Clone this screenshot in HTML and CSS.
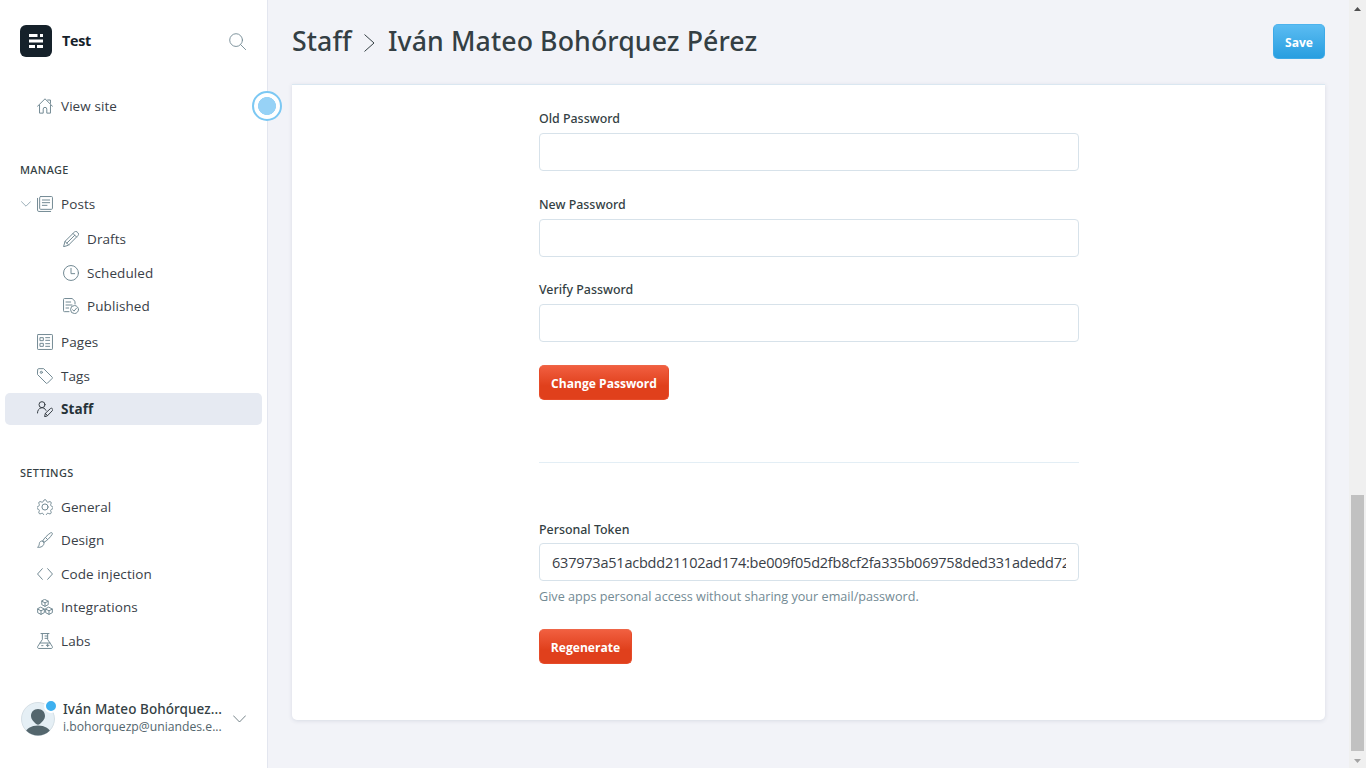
FILE: index.html
```html
<!DOCTYPE html>
<html lang="en">
<head>
<meta charset="utf-8">
<title>Test - Staff</title>
<link rel="stylesheet" href="styles.css">
</head>
<body>
<div class="app">
  <aside class="sidebar">
    <header class="site">
      <svg class="site-logo" viewBox="0 0 32 32"><rect width="32" height="32" rx="6" fill="#15212a"/><path d="M9 9h8.500v3H9zM20 9h3v3h-3zM9 14.500h14v3H9zM9 20h6v3H9zM17 20h6v3h-6z" fill="#fff"/></svg>
      <span class="site-name">Test</span>
      <svg class="search" viewBox="0 0 24 24"><circle cx="10" cy="10" r="9"/><path d="M16.500 16.500l7 7"/></svg>
    </header>

    <nav class="nav">
      <a class="item view-site"><svg viewBox="0 0 24 24"><path d="M.7 12.500L12 1.200l11.300 11.300M3.800 11v11.700h5.500v-6a2.700 2.700 0 0 1 5.400 0v6h5.500V11M16 3h4.200v5"/></svg>View site</a>

      <h2 class="heading">Manage</h2>
      <a class="item posts"><svg class="caret" viewBox="0 0 10 6"><path d="M.5.700L5 5.200 9.500.700"/></svg><svg viewBox="0 0 24 24"><rect x="4" y=".8" width="19.200" height="19.200" rx="1.500"/><path d="M.8 3.500v17.700a2 2 0 0 0 2 2h17.700M8 6h11M8 10h11M8 14h7"/></svg>Posts</a>
      <a class="item sub"><svg viewBox="0 0 24 24"><path d="M1 23l2-7.500L17.200 1.500a2.700 2.700 0 0 1 4 0l1.300 1.300a2.700 2.700 0 0 1 0 4L8.500 21zM3 15.500L8.500 21M15 3.700L20.300 9M5.700 18.200L17.700 6.300"/></svg>Drafts</a>
      <a class="item sub"><svg viewBox="0 0 24 24"><circle cx="12" cy="12" r="11.200"/><path d="M12 5v8h5.500"/></svg>Scheduled</a>
      <a class="item sub"><svg viewBox="0 0 24 24"><path d="M9 20.500H2.200A1.400 1.400 0 0 1 .8 19V2.200A1.400 1.400 0 0 1 2.200.8h11.500L18 5v4M4.500 6h7M4.500 10.500h9M4.500 15h4"/><circle cx="17.300" cy="17.300" r="6"/><path d="M14.300 17.500l2.200 2.200 3.800-4.500"/></svg>Published</a>
      <a class="item pages"><svg viewBox="0 0 24 24"><rect x=".8" y=".8" width="22.400" height="22.400" rx="1"/><path d="M5 5.500h4.500V10H5zM5 14h4.500v4.500H5zM13 5.500h6M13 9.500h6M13 14.500h6M13 18.500h6"/></svg>Pages</a>
      <a class="item tags"><svg viewBox="0 0 24 24"><path d="M1 2.300A1.300 1.300 0 0 1 2.300 1H10l12.800 12.800a1.300 1.300 0 0 1 0 1.800l-7.200 7.200a1.300 1.300 0 0 1-1.800 0L1 10z"/><circle cx="6.500" cy="6.500" r="1.600"/></svg>Tags</a>
      <a class="item active"><svg viewBox="0 0 24 24"><circle cx="7.500" cy="5.500" r="4.500"/><path d="M.7 18c0-9 10-10.500 12.800-4M11.500 23l1-4.500 7.500-7a2 2 0 0 1 3 3L15.800 22zM12.500 18.500l3.300 3.500"/></svg>Staff</a>

      <h2 class="heading settings">Settings</h2>
      <a class="item"><svg viewBox="0 0 24 24"><circle cx="12" cy="12" r="4.600"/><path d="M10 2.400c.8-2.100 3.200-2.100 4 0l.4 1.100c.5 1.100 1.600 1.500 2.700 1.100l1.100-.5c2-.8 3.700.8 2.900 2.900l-.5 1.100c-.4 1.100 0 2.200 1.100 2.700l1 .4c2 .8 2 3.200 0 4l-1 .3c-1.100.5-1.500 1.600-1.100 2.700l.5 1c.8 2.100-.9 3.700-2.900 2.900l-1.100-.5c-1.100-.4-2.200 0-2.700 1.100l-.4 1c-.8 2-3.200 2-4 0l-.4-1c-.5-1.100-1.600-1.500-2.700-1.100l-1.100.5c-2 .8-3.700-.8-2.900-2.900l.5-1c.4-1.100 0-2.200-1.100-2.700l-1-.3c-2-.8-2-3.200 0-4l1-.4c1.100-.5 1.500-1.600 1.100-2.700l-.5-1.100C2.100 4.900 3.800 3.300 5.800 4.100l1.100.5c1.100.4 2.200 0 2.700-1.100z"/></svg>General</a>
      <a class="item design"><svg viewBox="0 0 24 24"><path d="M8.500 13.500C11 9 15.500 4.500 20.500 1.200c1.700-1 3.200.6 2.300 2.300-3.300 5-7.500 9.300-12.300 12zM8.500 13.500c-2.500-.6-5 1.300-5 4-.1 2.300-1.200 4.300-2.700 5.500 4.500.5 10.500-1.500 9.700-7.500zM13 8.500l2.800 2.800"/></svg>Design</a>
      <a class="item code"><svg viewBox="0 0 24 24"><path d="M8 4L.8 12 8 20M16 4l7.200 8-7.200 8"/></svg>Code injection</a>
      <a class="item integrations"><svg viewBox="0 0 24 24"><path d="M12 .8l4.800 2.500v5.200L12 11 7.200 8.500V3.300zM7.200 3.300L12 5.800l4.800-2.500M12 5.800V11M6 12.500l5 2.600v5.400l-5 2.600-5-2.600v-5.400zM1 15.100l5 2.600 5-2.600M6 17.700v5.400M18 12.500l5 2.600v5.400l-5 2.600-5-2.600v-5.400zM13 15.100l5 2.600 5-2.600M18 17.700v5.400"/></svg>Integrations</a>
      <a class="item labs"><svg viewBox="0 0 24 24"><path d="M6 .8h12M8 .8v9L1.200 20c-1 1.700-.2 3.200 1.500 3.200h18.600c1.700 0 2.500-1.500 1.500-3.200L16 9.800v-9M12 4.500h4M12 8h4M4.500 15h15M7 19h2M14 18.500h4M16 16.500v4"/></svg>Labs</a>
    </nav>

    <footer class="user">
      <div class="avatar">
        <svg viewBox="0 0 34 34"><defs><clipPath id="face"><circle cx="17" cy="17" r="16.500"/></clipPath></defs><circle cx="17" cy="17" r="16.500" fill="#e5eff5" stroke="#d5dfe5"/><g clip-path="url(#face)" fill="#54666d"><path d="M17 7c4.300 0 7 3 7 7 0 3.700-3.800 6.700-5.200 8-1.100 1-2.500 1-3.600 0C13.800 20.700 10 17.700 10 14c0-4 2.700-7 7-7z"/><ellipse cx="17" cy="31" rx="12.500" ry="7.500"/></g></svg>
        <span class="badge"></span>
      </div>
      <div class="who"><div class="who-name">Iván Mateo Bohórquez...</div><div class="who-mail">i.bohorquezp@uniandes.e...</div></div>
      <svg class="user-caret" viewBox="0 0 13 8"><path d="M.5.800l6 6.200 6-6.200"/></svg>
    </footer>
    <span class="pulse"></span>
  </aside>

  <main class="main">
    <header class="topbar">
      <h1 class="title"><span class="crumb">Staff</span><svg viewBox="0 0 11 18"><path d="M.8.800L10 9 .8 17.200"/></svg><span>Iván Mateo Bohórquez Pérez</span></h1>
      <button class="btn save">Save</button>
    </header>
    <section class="card">
      <form class="form">
        <div class="field"><label>Old Password</label><input type="password"></div>
        <div class="field"><label>New Password</label><input type="password"></div>
        <div class="field"><label>Verify Password</label><input type="password"></div>
        <button type="button" class="btn red change">Change Password</button>
        <hr>
        <div class="field"><label>Personal Token</label><input class="token" type="text" value="637973a51acbdd21102ad174:be009f05d2fb8cf2fa335b069758ded331adedd72b"></div>
        <p class="hint">Give apps personal access without sharing your email/password.</p>
        <button type="button" class="btn red regen">Regenerate</button>
      </form>
    </section>
  </main>

  <div class="scrollbar"><svg viewBox="0 0 7 4"><path d="M0 4L3.500 0 7 4z" fill="#505050"/></svg><div class="thumb"></div><svg viewBox="0 0 7 4"><path d="M0 0h7L3.500 4z" fill="#a3a3a3"/></svg></div>
</div>
</body>
</html>
```
FILE: styles.css
```css
* { box-sizing: border-box; }
body { margin: 0; overflow: hidden; font-family: "Open Sans", "Noto Sans", sans-serif; color: #343f44; }
svg { fill: none; stroke-linecap: round; stroke-linejoin: round; flex: none; }
.app { display: flex; width: 1366px; height: 768px; background: #f2f3f8; }

.sidebar { position: relative; display: flex; flex-direction: column; width: 268px; background: #fff; border-right: 1px solid #e3e6ef; }
.site { display: flex; align-items: center; height: 82px; padding: 0 21px 0 20px; }
.site-logo { width: 32px; height: 32px; }
.site-name { margin: -2px 0 0 10px; flex: 1; font-size: 14.300px; font-weight: 700; color: #15212a; letter-spacing: -.3px; }
.search { width: 17px; height: 17px; stroke: #738a94; stroke-width: 1.300; }
.nav { height: 575px; padding: 8px 5px 0; display: flex; flex-direction: column; }
.item { display: flex; flex: none; align-items: center; height: 33.600px; padding-left: 32px; border-radius: 5px; font-size: 13.500px; color: #394047; letter-spacing: .08px; }
.item svg { width: 16px; height: 16px; margin-right: 8px; stroke: #738a94; stroke-width: 1.500; }
.view-site { height: 32px; }
.heading { margin: 39px 0 0 15px; height: 17px; font: 500 10.900px/17px "Noto Sans", sans-serif; letter-spacing: .35px; text-transform: uppercase; }
.posts { margin-top: 9px; padding-left: 16px; }
.item .caret { width: 10px; height: 6px; margin-right: 6px; stroke: #9baeb8; stroke-width: 1; }
.sub { height: 33.500px; padding-left: 58px; }
.posts + .sub { margin-top: 2px; }
.pages { margin-top: 2px; height: 33.500px; }
.tags { height: 34px; }
.active { height: 32px; margin-top: .3px; background: #e6eaf2; font-weight: 700; color: #263238; }
.item.active svg { stroke: #394047; }
.settings { margin-bottom: 9px; }
.design { height: 34px; }
.code { height: 33px; }
.integrations { height: 34px; }
.labs { height: 33px; }
.user { display: flex; align-items: center; margin: 42px 0 0 21px; height: 38px; }
.avatar { position: relative; width: 34px; height: 34px; margin-top: 1px; }
.avatar svg { display: block; width: 34px; height: 34px; }
.badge { position: absolute; top: -3px; right: -3px; width: 14px; height: 14px; border: 2px solid #fff; border-radius: 50%; background: #3eb0ef; }
.who { margin: 0 0 0 8px; width: 162px; white-space: nowrap; }
.who-name { font: 500 13.500px/18px "Noto Sans", sans-serif; letter-spacing: .06px; }
.who-mail { font-size: 12.200px; line-height: 18px; color: #54666d; }
.user-caret { width: 13px; height: 8px; margin: 2px 0 0 8px; stroke: #54666d; stroke-width: .8; }
.pulse { position: absolute; left: 252px; top: 91px; width: 30px; height: 30px; border: 2px solid #7cc8f3; border-radius: 50%; background: radial-gradient(circle, #97d2f6 0 8.700px, #fff 9.300px); }

.main { width: 1081px; padding: 0 24px; }
.topbar { display: flex; align-items: center; justify-content: space-between; height: 84px; padding-bottom: 1px; }
.title { display: flex; align-items: center; margin: -1px 0 0; font: 500 26.700px/36px "Noto Sans", "Open Sans", sans-serif; letter-spacing: .1px; white-space: nowrap; }
.title svg { width: 11px; height: 18px; margin: 3px 13px 0 13px; stroke: #343f44; stroke-width: 1; }
.crumb { width: 59px; }
.btn { display: block; height: 35px; padding: 1px 0 0; border: 1px solid; border-radius: 5px; font: 700 12.100px "Open Sans", sans-serif; color: #fff; text-align: center; }
.save { width: 52px; background: linear-gradient(#5bbcf2, #289ee0); border-color: #4db3ed #3daae8 #3da9e6; }
.card { height: 636px; padding: 24px 0 0 247px; background: #fff; border-top: 1px solid #dae7f1; border-radius: 0 0 5px 5px; box-shadow: 0 1px 4px rgba(40,60,90,.12); }
.form { width: 540px; }
.field { height: 85.700px; }
label { display: block; height: 24px; font: 500 12.400px/19px "Noto Sans", sans-serif; }
input { display: block; width: 540px; height: 38px; padding: 0 12px; border: 1px solid #d7e2ea; border-radius: 4px; background: #fff; outline: none; font: 14.500px "Open Sans", sans-serif; color: #394047; }
.token { letter-spacing: -.22px; }
.red { background: linear-gradient(#f15f40, #e0401c 60%, #e0401c); border-color: #ee6547 #e64b29 #e64b29; }
.change { width: 130px; margin-top: -1px; }
hr { height: 1px; margin: 62px 0 57px; border: 0; background: #e3eef5; }
hr + .field { height: 61px; }
hr + .field label { height: 23px; }
.hint { margin: 6px 0 23px; height: 19px; line-height: 19px; font-size: 12.630px; color: #738a94; white-space: nowrap; }
.regen { width: 93px; }

.scrollbar { display: flex; flex-direction: column; align-items: center; width: 17px; padding: 7px 0 5px; background: #f0f0f0; }
.scrollbar svg { width: 7px; height: 4px; }
.thumb { width: 13px; height: 256px; margin: 484px 0 8px; background: #c1c1c1; flex: none; }
```
